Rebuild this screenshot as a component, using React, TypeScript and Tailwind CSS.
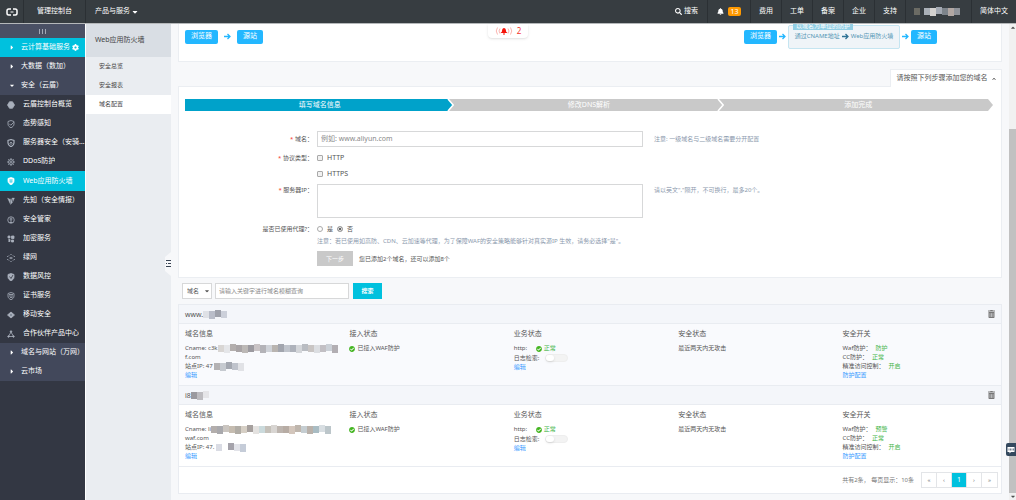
import { useState } from "react";
import type { ReactNode } from "react";
import clsx from "clsx";
import { FaBell, FaCaretDown, FaCaretRight, FaCheckCircle, FaCog, FaSearch, FaTrashAlt } from "react-icons/fa";

interface Service {
    name: string;
    icon: ReactNode;
    active?: boolean;
}

interface DomainRecord {
    id: string;
    title: string;
    titleCells: string[];
    cname: string;
    cnameCells: string[];
    cnameTail: string;
    ip: string;
    ipCells: string[];
    waf: string;
}

const SHIELD = "M8 1 L14 3 V8 C14 12 11 14 8 15.5 C5 14 2 12 2 8 V3 Z";

/** 16x16 line icon used in the service list. */
function Glyph({ children }: { children: ReactNode }) {
    return (
        <svg className="h-2 w-2 shrink-0" viewBox="0 0 16 16" fill="none" stroke="currentColor" strokeWidth={1.6}>
            {children}
        </svg>
    );
}

const services: Service[] = [
    { name: "云盾控制台概览", icon: <Glyph><path d="M5 1.5h6L15 8l-4 6.5H5L1 8z" fill="currentColor" /></Glyph> },
    { name: "态势感知", icon: <Glyph><path d={SHIELD} /><path d="M4.5 7.5l3 3 6-6" /></Glyph> },
    { name: "服务器安全（安骑士）", icon: <Glyph><path d={SHIELD} strokeWidth={2.4} /><path d="M5 9l3-3 3 3M6 10h4" /></Glyph> },
    {
        name: "DDoS防护",
        icon: (
            <Glyph>
                <circle cx="8" cy="8" r="5" />
                <circle cx="8" cy="8" r="2" />
                <path d="M8 0v3M8 13v3M0 8h3M13 8h3M2.5 2.5l2 2M11.5 11.5l2 2M13.5 2.5l-2 2M4.5 11.5l-2 2" />
            </Glyph>
        ),
    },
    {
        name: "Web应用防火墙",
        active: true,
        icon: (
            <Glyph>
                <path d={SHIELD} fill="currentColor" />
                <path d="M4.5 5.5h7M4.5 8h7M5.5 10.5h5M8 5.5v2.5M6.5 8v2.5M9.5 8v2.5" stroke="#00c1de" strokeWidth={1} />
            </Glyph>
        ),
    },
    { name: "先知（安全情报）", icon: <Glyph><path d="M1 2l5 11 1-8zM8 3l-1 12 4-4zM10 2h5l-3 7z" fill="currentColor" strokeWidth={0.6} /></Glyph> },
    { name: "安全管家", icon: <Glyph><circle cx="8" cy="8" r="6.5" /><circle cx="8" cy="6" r="2" /><path d="M8 8v6M5 13h6" /></Glyph> },
    { name: "加密服务", icon: <Glyph><path d="M2 2h4v4H2zM9 2h5v5H9zM3 9h3v4H3M9 10h4v4H9z" fill="currentColor" /></Glyph> },
    {
        name: "绿网",
        icon: (
            <Glyph>
                <circle cx="8" cy="8" r="1.5" />
                <path d="M7 1h2M7 15h2M1.5 4v2M14.5 4v2M1.5 10v2M14.5 10v2M4 3l1 1M12 3l-1 1M4 13l1-1M12 13l-1-1M4 8h1M11 8h1" strokeWidth={2} />
            </Glyph>
        ),
    },
    { name: "数据风控", icon: <Glyph><path d={SHIELD} fill="currentColor" /><path d="M5 7l3 4 4-7" stroke="#333743" /></Glyph> },
    { name: "证书服务", icon: <Glyph><path d={SHIELD} /><path d="M4 5h8M4 8h8M6 11h5" /></Glyph> },
    { name: "移动安全", icon: <Glyph><path d="M8 2l7 6-7 6-7-6z" fill="currentColor" /><circle cx="8" cy="8" r="2" fill="#77808f" stroke="none" /></Glyph> },
    { name: "合作伙伴产品中心", icon: <Glyph><path d="M8 4L3 13h10z" /><circle cx="8" cy="3" r="1.5" fill="currentColor" /><circle cx="3" cy="13" r="1.5" fill="currentColor" /><circle cx="13" cy="13" r="1.5" fill="currentColor" /></Glyph> },
];

const domains: DomainRecord[] = [
    {
        id: "www",
        title: "www.",
        titleCells: ["#dfe1e6", "#b9bdc9", "#9ea1ab", "#ccd0da"],
        cname: "c3k",
        cnameCells: ["#d9d6d4", "#e5e6e9", "#b3aead", "#a9a4a6", "#bcb8b6", "#9c9aa0", "#c9c3c5", "#b4b3b8", "#cfd2d8", "#b9b4b0", "#a2a5ae", "#c0c4cc", "#aeb2bb", "#d4d6da", "#b9bcc2", "#c9c5c4", "#dcdee2", "#c2bfc4", "#cbd0d7", "#b2aeb3"],
        cnameTail: "f.com",
        ip: "47",
        ipCells: ["#b4b2b4", "#c6cad0", "#a4a8b1", "#bfc3cc", "#e1e2e6"],
        waf: "防护",
    },
    {
        id: "i",
        title: "i8",
        titleCells: ["#9a999e", "#bdbcc0", "#e5e5e8"],
        cname: "li",
        cnameCells: ["#b3aeac", "#a9a9ad", "#cac5c0", "#c5bcb0", "#b1ada6", "#d6cfc5", "#a6a09e", "#e4e2e0", "#cbdadc", "#c5c1ba", "#d8d5d2", "#bdb5af", "#b7aca4", "#d3c6bc", "#bfb6ad", "#c5cdd1", "#b9b1aa", "#a9bcc3", "#d8dee2", "#bcc6ca"],
        cnameTail: "waf.com",
        ip: "47.",
        ipCells: ["#dadce4", "#ffffff", "#a5a3ab", "#e2e3e9", "#c5ccd8"],
        waf: "预警",
    },
];

/** Masked part of a value, drawn as a row of blocks. */
function Mosaic({ cells }: { cells: string[] }) {
    return (
        <svg className="inline-block align-top" width={cells.length * 6} height="9" viewBox={`0 0 ${cells.length * 6} 9`} shapeRendering="crispEdges" aria-hidden="true">
            {cells.map((fill, i) => (
                <rect key={i} x={i * 6} y={i % 4 === 2 ? 0 : 1} width="6" height={i % 3 === 1 ? 8 : 7} fill={fill} />
            ))}
        </svg>
    );
}

function Arrow({ className }: { className?: string }) {
    return (
        <svg className={clsx("h-[7px] w-[7px] shrink-0", className)} viewBox="0 0 14 14" fill="none" stroke="currentColor" strokeWidth={2.6}>
            <path d="M0 7h11M7 2l5 5-5 5" />
        </svg>
    );
}

function TopLink({ children }: { children: ReactNode }) {
    return (
        <a href="#" className="flex h-full w-[31px] items-center justify-center border-l border-[#2b3034]">
            {children}
        </a>
    );
}

function TopBar() {
    return (
        <header className="relative flex h-6 shrink-0 items-center border-b border-[#b5b8ba] bg-[#373d41] text-[7px] text-white">
            <a href="#" aria-label="首页" className="flex h-full w-6 items-center justify-center border-r border-[#2b3034]">
                <svg className="h-2 w-3" viewBox="0 0 24 16" fill="none" stroke="currentColor" strokeWidth={3}>
                    <path d="M10 2H5.5Q2 2 2 5.5v5Q2 14 5.5 14H10M14 2h4.5Q22 2 22 5.5v5Q22 14 18.5 14H14" />
                    <path d="M9 8h6" strokeWidth={2} />
                </svg>
            </a>
            <a href="#" className="flex h-full w-[62px] items-center justify-center border-r border-[#2b3034]">管理控制台</a>
            <button className="flex items-center gap-0.5 pl-[9px]">
                产品与服务
                <FaCaretDown className="h-2 w-[6px]" />
            </button>
            <div className="ml-auto flex h-full items-center">
                <button className="flex items-center gap-0.5 pr-[9px]">
                    <FaSearch className="h-[7px] w-[7px]" />
                    搜索
                </button>
                <a href="#" className="flex h-full w-[43px] items-center justify-center gap-1 border-l border-[#2b3034]">
                    <FaBell className="h-[7px] w-[7px]" />
                    <span className="rounded-xs bg-[#ff9900] px-0.5 leading-[9px]">13</span>
                </a>
                <TopLink>费用</TopLink>
                <TopLink>工单</TopLink>
                <TopLink>备案</TopLink>
                <TopLink>企业</TopLink>
                <TopLink>支持</TopLink>
                <a href="#" aria-label="账号" className="flex h-full w-[66px] items-center gap-1 border-l border-[#2b3034] pl-2">
                    <Mosaic cells={["#6b6b64"]} />
                    <Mosaic cells={["#aab0b8", "#d4d2d0", "#a3a9b3", "#7d848b", "#b1a7a3", "#8f939a"]} />
                </a>
                <a href="#" className="flex h-full w-[45px] items-center justify-center border-l border-[#2b3034]">简体中文</a>
            </div>
            <div className="absolute top-6 left-1/2 z-10 flex h-[14px] w-10 -translate-x-1/2 items-center justify-center gap-1 rounded-b-sm bg-white text-[8px] text-[#f5352b] shadow">
                <svg className="h-2 w-[18px]" viewBox="0 0 36 16" fill="none" stroke="#f9a19c" strokeWidth={1.6}>
                    <path d="M5 1Q0 8 5 15M10 3Q6 8 10 13M31 1Q36 8 31 15M26 3Q30 8 26 13" />
                    <path d="M18 2c-4 1-4 4-4 7l-3 3h14l-3-3c0-3 0-6-4-7zM16 13h4v2h-4z" fill="#f5150b" stroke="none" />
                </svg>
                2
            </div>
        </header>
    );
}

function GroupLink({ name, open, active }: { name: string; open?: boolean; active?: boolean }) {
    return (
        <a href="#" className={clsx("flex h-[19px] items-center pl-[9px] text-white", active ? "bg-[#00c1de]" : "bg-[#42485b]")}>
            <span className="flex w-3">{open ? <FaCaretDown className="h-[7px] w-[6px]" /> : <FaCaretRight className="h-[7px] w-[6px]" />}</span>
            {name}
            {active && <FaCog className="mr-[6px] ml-auto h-[7px] w-[7px]" />}
        </a>
    );
}

function SideBar() {
    return (
        <nav aria-label="产品" className="w-[85px] shrink-0 bg-[#333743] text-[7px] whitespace-nowrap">
            <button aria-label="收起菜单" className="flex h-[14px] w-full items-center justify-center gap-0.5 bg-[#4a5064]">
                <span className="h-[5px] w-px bg-[#a3a8b6]" />
                <span className="h-[5px] w-px bg-[#a3a8b6]" />
                <span className="h-[5px] w-px bg-[#a3a8b6]" />
            </button>
            <GroupLink name="云计算基础服务" active />
            <GroupLink name="大数据（数加）" />
            <GroupLink name="安全（云盾）" open />
            {services.map((s) => (
                <a
                    key={s.name}
                    href="#"
                    className={clsx("flex items-center gap-2 pl-[7px]", s.active ? "h-5 bg-[#00c1de] text-white" : "h-[19px] text-[#a9b0bc]")}
                >
                    {s.icon}
                    <span className="truncate text-white">{s.name}</span>
                </a>
            ))}
            <GroupLink name="域名与网站（万网）" />
            <GroupLink name="云市场" />
        </nav>
    );
}

function SubMenu() {
    return (
        <nav aria-label="Web应用防火墙" className="relative w-[86px] shrink-0 border-l border-white bg-[#eaedf1] text-[6px] text-[#444]">
            <h1 className="flex h-[33px] items-center bg-[#d9dee4] pl-[9px] text-[7px]">Web应用防火墙</h1>
            <a href="#" className="flex h-[19px] items-center pl-[13px]">安全总览</a>
            <a href="#" className="flex h-[19px] items-center pl-[13px]">安全报表</a>
            <a href="#" className="flex h-[19px] items-center bg-white pl-[13px]">域名配置</a>
            <button aria-label="收起" className="absolute top-[228px] right-0">
                <svg className="h-6 w-[6px]" viewBox="0 0 6 24">
                    <path d="M6 0L0 5v14l6 5z" fill="#f7f8fa" />
                    <path d="M1 8.5h5M1 11.5h1M3 11.5h3M1 14.5h5" stroke="#394454" />
                </svg>
            </button>
        </nav>
    );
}

function FlowNode({ children }: { children: ReactNode }) {
    return <span className="flex h-[14px] items-center justify-center rounded-xs bg-[#23b7ff] px-[6px] text-[7px] text-white">{children}</span>;
}

function FlowPanel() {
    return (
        <section className="flex h-[38px] justify-between border border-t-0 border-[#ebeef2] bg-white pr-16 pl-[6px]">
            <div className="flex items-center gap-[6px] pb-3 text-[#23b7ff]">
                <FlowNode>浏览器</FlowNode>
                <Arrow />
                <FlowNode>源站</FlowNode>
            </div>
            <div className="flex items-center gap-0.5 pb-3 text-[#23b7ff]">
                <FlowNode>浏览器</FlowNode>
                <Arrow />
                <div className="relative flex h-6 w-28 items-center justify-center gap-0.5 rounded-xs border border-[#c5e5f1] bg-[#eff4f8] text-[6px] whitespace-nowrap text-[#5596b5]">
                    <span className="absolute -top-1 left-1 h-2 w-[60px] bg-[#92cfe5] text-center leading-[8px] text-white">以域名为单位的防护</span>
                    通过CNAME地址
                    <Arrow className="text-[#2f7396]" />
                    Web应用防火墙
                </div>
                <Arrow />
                <FlowNode>源站</FlowNode>
            </div>
        </section>
    );
}

function Step({ name, current, last }: { name: string; current?: boolean; last?: boolean }) {
    return (
        <li className={clsx("flex h-3 flex-1", current ? "text-[#00a2ca]" : "text-[#c9c9c9]")} aria-current={current ? "step" : undefined}>
            <div className="flex-1 bg-current pl-2 text-center text-[7px] leading-3">
                <span className="text-white">{name}</span>
            </div>
            <svg className="h-3 w-2" viewBox="0 0 8 12">
                <rect width="8" height="12" fill={last ? "#fff" : "#c9c9c9"} />
                <path d={last ? "M0 0h3l5 6-5 6H0z" : "M0 0h2l5 6-5 6H0z"} fill="currentColor" />
                {!last && <path d="M2 0l5.200 6L2 12" fill="none" stroke="#fff" strokeWidth={1.6} />}
            </svg>
        </li>
    );
}

function FieldLabel({ htmlFor, required, children }: { htmlFor?: string; required?: boolean; children: ReactNode }) {
    const Tag = htmlFor ? "label" : "span";
    return (
        <Tag htmlFor={htmlFor} className="pr-1 text-right">
            {required && <span className="text-[#f5352b]">* </span>}
            {children}：
        </Tag>
    );
}

const checkBox = "h-[6px] w-[6px] appearance-none rounded-[1px] border border-[#a9a9a9] bg-[#f1f1f1] checked:bg-[#444]";
const radioBox = "h-[6px] w-[6px] appearance-none rounded-full border border-[#a9a9a9] bg-white checked:bg-[#333] checked:shadow-[inset_0_0_0_1px_#fff]";

function AddDomain() {
    const [proxy, setProxy] = useState(false);

    return (
        <>
            <div className="mt-[7px] flex justify-end">
                <button className="relative -mb-px flex h-[18px] w-[112px] items-center justify-center gap-1 border border-b-0 border-[#ebeef2] bg-white text-[7px]">
                    请按照下列步骤添加您的域名
                    <svg className="h-1 w-1" viewBox="0 0 8 8" fill="none" stroke="currentColor" strokeWidth={1.6}>
                        <path d="M1 6l3-4 3 4" />
                    </svg>
                </button>
            </div>
            <section className="border border-[#ebeef2] bg-white pt-3 pb-[11px]">
                <ol className="mr-2 ml-[6px] flex">
                    <Step name="填写域名信息" current />
                    <Step name="修改DNS解析" />
                    <Step name="添加完成" last />
                </ol>
                <form className="mt-5 grid grid-cols-[138px_326px_1fr] text-[6px]" onSubmit={(e) => e.preventDefault()}>
                    <div className="contents leading-4">
                        <FieldLabel htmlFor="domain" required>域名</FieldLabel>
                        <input id="domain" placeholder="例如: www.aliyun.com" className="h-4 border border-[#d7d8d9] px-[3px] text-[7px] placeholder:text-[#8a8a8a]" />
                        <span className="pl-[11px] text-[#8b99ad]">注意: 一级域名与二级域名需要分开配置</span>
                    </div>
                    <div className="col-span-3 mt-[3px] grid grid-cols-[138px_1fr] leading-4">
                        <FieldLabel required>协议类型</FieldLabel>
                        <label className="flex items-center gap-1 text-[7px]"><input type="checkbox" className={checkBox} />HTTP</label>
                        <label className="col-start-2 flex items-center gap-1 text-[7px]"><input type="checkbox" className={checkBox} />HTTPS</label>
                    </div>
                    <div className="contents leading-4">
                        <FieldLabel htmlFor="server" required>服务器IP</FieldLabel>
                        <textarea id="server" className="mt-0.5 h-[34px] resize-none border border-[#d7d8d9] p-1" />
                        <span className="pl-[11px] text-[#8b99ad]">请以英文","隔开，不可换行，最多20个。</span>
                    </div>
                    <div className="col-span-3 mt-[5px] grid grid-cols-[138px_1fr] leading-3">
                        <FieldLabel>是否已使用代理?</FieldLabel>
                        <div className="flex gap-1">
                            <label className="flex items-center gap-1"><input type="radio" name="proxy" checked={proxy} onChange={() => setProxy(true)} className={radioBox} />是</label>
                            <label className="flex items-center gap-1"><input type="radio" name="proxy" checked={!proxy} onChange={() => setProxy(false)} className={radioBox} />否</label>
                        </div>
                        <p className="col-start-2 text-[#8b99ad]">注意：若已使用如高防、CDN、云加速等代理，为了保障WAF的安全策略能够针对真实源IP 生效，请务必选择"是"。</p>
                        <div className="col-start-2 mt-1 flex items-center gap-[6px]">
                            <button className="h-[15px] w-9 bg-[#c9c9c9] text-white">下一步</button>
                            您已添加2个域名，还可以添加8个
                        </div>
                    </div>
                </form>
            </section>
        </>
    );
}

function SearchBar() {
    return (
        <form className="mt-[5px] flex pl-1 text-[6px]" onSubmit={(e) => e.preventDefault()}>
            <div className="relative">
                <select aria-label="搜索类型" className="h-4 w-[30px] appearance-none border border-[#d7d8d9] bg-white pl-1">
                    <option>域名</option>
                </select>
                <FaCaretDown className="pointer-events-none absolute top-1 right-[3px] h-2 w-1" />
            </div>
            <input aria-label="关键字" placeholder="请输入关键字进行域名模糊查询" className="ml-[3px] h-4 w-[134px] border border-[#d7d8d9] bg-white px-[3px] placeholder:text-[#8a8a8a]" />
            <button className="ml-1 h-4 w-[29px] bg-[#00c1de] font-bold text-white">搜索</button>
        </form>
    );
}

function Status({ children }: { children: ReactNode }) {
    return <span className="ml-1 text-[#44b549]">{children}</span>;
}

function DomainRows({ record, shaded }: { record: DomainRecord; shaded?: boolean }) {
    const cell = "h-[62px] border-b border-[#e9ecf1] pt-[5px] pl-[6px] align-top leading-[9px]";
    const heading = "mb-[5px] text-[7px] leading-[10px]";

    return (
        <tbody>
            <tr className="bg-[#f4f6fa]">
                <th colSpan={5} className="h-[19px] border-b border-[#e9ecf1] pr-[6px] pl-[6px] text-left font-normal">
                    <div className="flex items-center justify-between text-[7px] leading-[9px]">
                        <span className="flex">{record.title}<Mosaic cells={record.titleCells} /></span>
                        <button aria-label="删除" className="text-[#777]"><FaTrashAlt className="h-2 w-[7px]" /></button>
                    </div>
                </th>
            </tr>
            <tr className={shaded ? "bg-[#f9fafd]" : "bg-white"}>
                <td className={cell}>
                    <h2 className={heading}>域名信息</h2>
                    <p className="flex whitespace-pre">Cname: {record.cname}<Mosaic cells={record.cnameCells} /></p>
                    <p>{record.cnameTail}</p>
                    <p className="flex whitespace-pre">站点IP: {record.ip} <Mosaic cells={record.ipCells} /></p>
                    <a href="#" className="block text-[#3399ff]">编辑</a>
                </td>
                <td className={cell}>
                    <h2 className={heading}>接入状态</h2>
                    <p className="flex items-center gap-0.5"><FaCheckCircle className="h-[6px] w-[6px] text-[#44b521]" />已接入WAF防护</p>
                </td>
                <td className={cell}>
                    <h2 className={heading}>业务状态</h2>
                    <p className="flex items-center gap-0.5 text-[#44b549]">
                        <span className="w-5 text-[#555]">http:</span>
                        <FaCheckCircle className="h-[6px] w-[6px] text-[#44b521]" />
                        正常
                    </p>
                    <label className="flex h-[10px] items-center gap-[6px]">
                        日志检索:
                        <input type="checkbox" role="switch" className="h-2 w-[23px] appearance-none rounded-full border border-[#eeeeee] bg-[#f3f3f3] before:block before:h-[6px] before:w-2 before:rounded-full before:bg-white before:shadow before:content-['']" />
                    </label>
                    <a href="#" className="block text-[#3399ff]">编辑</a>
                </td>
                <td className={cell}>
                    <h2 className={heading}>安全状态</h2>
                    <p>最近两天内无攻击</p>
                </td>
                <td className={cell}>
                    <h2 className={heading}>安全开关</h2>
                    <p>Waf防护：<Status>{record.waf}</Status></p>
                    <p>CC防护：<Status>正常</Status></p>
                    <p>精准访问控制：<Status>开启</Status></p>
                    <a href="#" className="block text-[#3399ff]">防护配置</a>
                </td>
            </tr>
        </tbody>
    );
}

function DomainList() {
    return (
        <section className="mt-[5px] border border-[#e9ecf1] bg-white text-[6px]">
            <table className="w-full table-fixed border-separate border-spacing-0">
                {domains.map((d, i) => (
                    <DomainRows key={d.id} record={d} shaded={i === 0} />
                ))}
            </table>
            <div className="flex h-[26px] items-center justify-end gap-[7px] pr-[3px] text-[#777]">
                共有2条， 每页显示：10条
                <div className="flex border border-[#e3e5e8]">
                    {["«", "‹", "1", "›", "»"].map((p) => (
                        <button
                            key={p}
                            className={clsx("h-[14px] w-[15px] border-r border-[#e3e5e8] last:border-r-0", p === "1" && "bg-[#00c1de] text-[7px] text-white")}
                        >
                            {p}
                        </button>
                    ))}
                </div>
            </div>
        </section>
    );
}

function ScrollTrack() {
    return (
        <div className="flex w-[7px] shrink-0 flex-col items-center bg-[#f1f1f1] text-[#505050]" aria-hidden="true">
            <FaCaretDown className="h-2 w-1 rotate-180" />
            <div className="flex-[97]" />
            <div className="w-full flex-[365] bg-[#c1c1c1]" />
            <FaCaretDown className="h-[7px] w-1" />
        </div>
    );
}

export default function App() {
    return (
        <div className="flex h-screen flex-col overflow-hidden bg-[#f7f8fa] font-['Noto_Sans','Noto_Sans_CJK_SC',sans-serif] text-[#555]">
            <TopBar />
            <div className="flex min-h-0 flex-1">
                <SideBar />
                <SubMenu />
                <main className="min-w-0 flex-1 overflow-hidden pr-[7px] pl-[7px]">
                    <FlowPanel />
                    <AddDomain />
                    <SearchBar />
                    <DomainList />
                </main>
                <ScrollTrack />
            </div>
            <button aria-label="在线咨询" className="fixed right-0 bottom-11 flex h-[13px] w-[10px] items-center justify-center rounded-l-xs bg-[#34495e]">
                <svg className="h-2 w-2" viewBox="0 0 16 16">
                    <path d="M1 2h14v10H8l-3 3v-3H1z" fill="#fff" />
                    <path d="M4 5v4M7 5v4M10 5v4M13 5v4" stroke="#34495e" strokeWidth={1.4} />
                </svg>
            </button>
        </div>
    );
}
